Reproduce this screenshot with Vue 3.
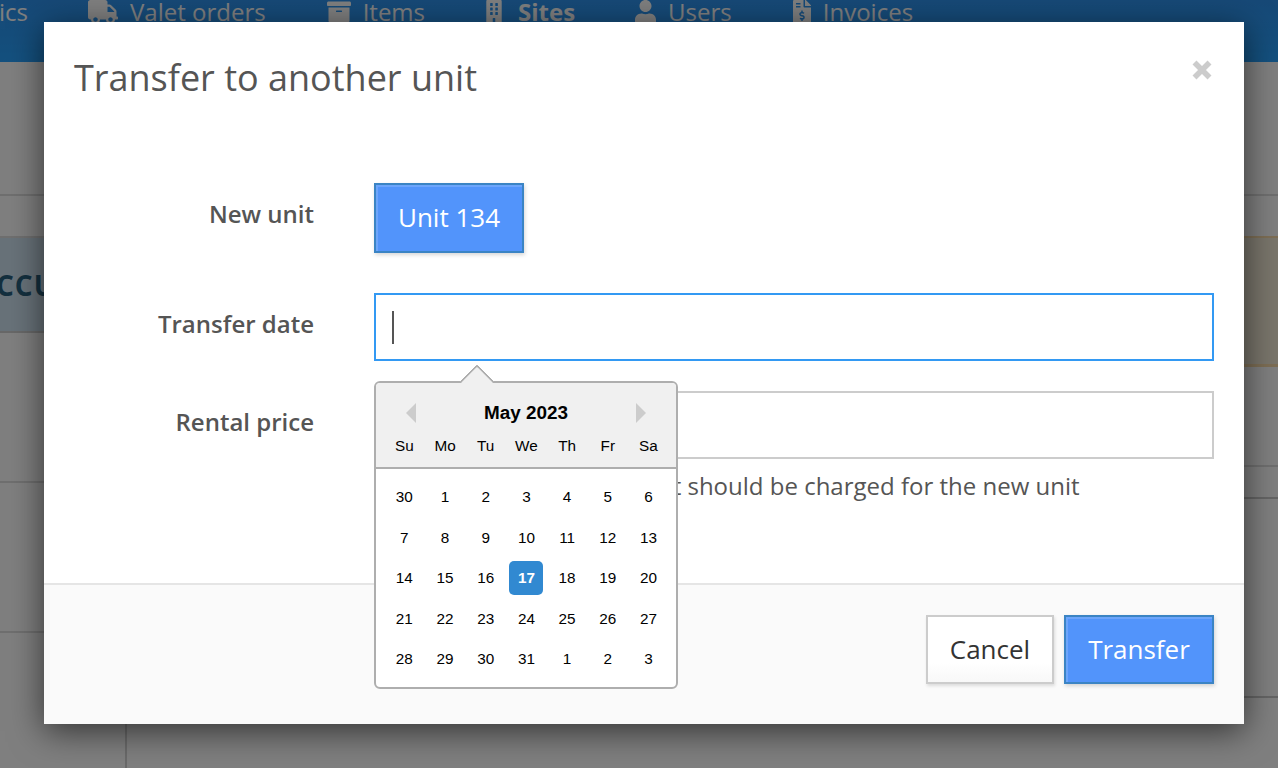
<script setup>
const navItems = [
  { label: 'Valet orders', ml: 60, vb: '0 0 640 512', w: 30, h: 24, d: 'M624 352h-16V243.9c0-12.7-5.1-24.9-14.1-33.9L494 110.1c-9-9-21.2-14.1-33.9-14.1H416V48c0-26.5-21.5-48-48-48H48C21.5 0 0 21.5 0 48v320c0 26.5 21.5 48 48 48h16c0 53 43 96 96 96s96-43 96-96h128c0 53 43 96 96 96s96-43 96-96h48c8.8 0 16-7.2 16-16v-32c0-8.8-7.2-16-16-16zM160 464c-26.5 0-48-21.5-48-48s21.5-48 48-48 48 21.5 48 48-21.5 48-48 48zm320 0c-26.5 0-48-21.5-48-48s21.5-48 48-48 48 21.5 48 48-21.5 48-48 48zm80-208H416V144h44.1l99.9 99.9V256z' },
  { label: 'Items', ml: 61, vb: '0 0 512 512', w: 24, h: 24, d: 'M32 448c0 17.7 14.3 32 32 32h384c17.7 0 32-14.3 32-32V160H32v288zm160-212c0-6.6 5.4-12 12-12h104c6.6 0 12 5.4 12 12v8c0 6.6-5.4 12-12 12H204c-6.6 0-12-5.4-12-12v-8zM480 32H32C14.3 32 0 46.3 0 64v48c0 8.8 7.2 16 16 16h480c8.8 0 16-7.2 16-16V64c0-17.7-14.3-32-32-32z' },
  { label: 'Sites', ml: 60, bold: true, vb: '0 0 448 512', w: 18, h: 24, d: 'M436 480h-20V24c0-13.3-10.7-24-24-24H56C42.7 0 32 10.7 32 24v456H12c-6.6 0-12 5.4-12 12v20h448v-20c0-6.6-5.4-12-12-12zM128 76c0-6.6 5.4-12 12-12h40c6.6 0 12 5.4 12 12v40c0 6.6-5.4 12-12 12h-40c-6.6 0-12-5.4-12-12V76zm0 96c0-6.6 5.4-12 12-12h40c6.6 0 12 5.4 12 12v40c0 6.6-5.4 12-12 12h-40c-6.6 0-12-5.4-12-12v-40zm52 148h-40c-6.6 0-12-5.4-12-12v-40c0-6.6 5.4-12 12-12h40c6.6 0 12 5.4 12 12v40c0 6.6-5.4 12-12 12zm76 160h-64v-84c0-6.6 5.4-12 12-12h40c6.6 0 12 5.4 12 12v84zm64-172c0 6.6-5.4 12-12 12h-40c-6.6 0-12-5.4-12-12v-40c0-6.6 5.4-12 12-12h40c6.6 0 12 5.4 12 12v40zm0-96c0 6.6-5.4 12-12 12h-40c-6.6 0-12-5.4-12-12v-40c0-6.6 5.4-12 12-12h40c6.6 0 12 5.4 12 12v40zm0-96c0 6.6-5.4 12-12 12h-40c-6.6 0-12-5.4-12-12V76c0-6.6 5.4-12 12-12h40c6.6 0 12 5.4 12 12v40z' },
  { label: 'Users', ml: 60, vb: '0 0 448 512', w: 21, h: 24, d: 'M224 256c70.7 0 128-57.3 128-128S294.7 0 224 0 96 57.3 96 128s57.3 128 128 128zm89.6 32h-16.7c-22.2 10.2-46.9 16-72.9 16s-50.6-5.8-72.9-16h-16.7C60.2 288 0 348.2 0 422.4V464c0 26.5 21.5 48 48 48h352c26.5 0 48-21.5 48-48v-41.6c0-74.2-60.2-134.4-134.4-134.4z' },
  { label: 'Invoices', ml: 61, vb: '0 0 384 512', w: 18, h: 24, d: 'M377 105L279.1 7c-4.5-4.5-10.6-7-17-7H256v128h128v-6.1c0-6.3-2.5-12.4-7-16.9zm-153 31V0H24C10.7 0 0 10.7 0 24v464c0 13.3 10.7 24 24 24h336c13.3 0 24-10.7 24-24V160H248c-13.2 0-24-10.8-24-24zM64 72c0-4.42 3.58-8 8-8h80c4.42 0 8 3.58 8 8v16c0 4.42-3.58 8-8 8H72c-4.42 0-8-3.58-8-8V72zm0 80v-16c0-4.42 3.58-8 8-8h80c4.42 0 8 3.58 8 8v16c0 4.42-3.58 8-8 8H72c-4.42 0-8-3.58-8-8zm144 263.88V440c0 4.42-3.58 8-8 8h-16c-4.42 0-8-3.58-8-8v-24.29c-11.29-.58-22.27-4.52-31.37-11.35-3.9-2.93-4.1-8.77-.57-12.14l11.75-11.21c2.77-2.64 6.89-2.76 10.13-.73 3.87 2.42 8.26 3.72 12.82 3.72h28.11c6.5 0 11.8-5.92 11.8-13.19 0-5.95-3.61-11.19-8.77-12.73l-45-13.5c-18.59-5.58-31.58-23.42-31.58-43.39 0-24.52 19.05-44.44 42.67-45.07V232c0-4.42 3.58-8 8-8h16c4.42 0 8 3.58 8 8v24.29c11.29.58 22.27 4.51 31.37 11.35 3.9 2.93 4.1 8.77.57 12.14l-11.75 11.21c-2.77 2.64-6.89 2.76-10.13.73-3.87-2.43-8.26-3.72-12.82-3.72h-28.11c-6.5 0-11.8 5.92-11.8 13.19 0 5.95 3.61 11.19 8.77 12.73l45 13.5c18.59 5.58 31.58 23.42 31.58 43.39 0 24.53-19.05 44.44-42.67 45.07z' }
]

const leftRows = [
  { h: 134 },
  { h: 42 },
  { h: 95, kind: 'blue', text: 'CCUPIED' },
  { h: 150 },
  { h: 150 },
  { h: 135, kind: 'last' }
]
const rightRows = [
  { h: 134 },
  { h: 42 },
  { h: 131, kind: 'yellow' },
  { h: 100 },
  { h: 32, kind: 'dark' },
  { h: 199, kind: 'dark' },
  { h: 70, kind: 'last' }
]

const dayNames = ['Su', 'Mo', 'Tu', 'We', 'Th', 'Fr', 'Sa']
const days = [
  30, 1, 2, 3, 4, 5, 6,
  7, 8, 9, 10, 11, 12, 13,
  14, 15, 16, 17, 18, 19, 20,
  21, 22, 23, 24, 25, 26, 27,
  28, 29, 30, 31, 1, 2, 3
]
const selectedIndex = 17
</script>

<template>
  <div class="page">
    <header class="nav">
      <span class="nav-item first-item">ics</span>
      <span
        v-for="item in navItems"
        :key="item.label"
        class="nav-item"
        :class="{ bold: item.bold }"
        :style="{ marginLeft: item.ml + 'px' }"
      >
        <svg class="nav-icon" :viewBox="item.vb" :width="item.w" :height="item.h" preserveAspectRatio="none" fill="currentColor"><path :d="item.d" /></svg>
        {{ item.label }}
      </span>
    </header>

    <div class="content">
      <div class="col-left">
        <div v-for="(r, i) in leftRows" :key="i" class="row" :class="r.kind" :style="{ height: r.h + 'px' }">
          <span v-if="r.text" class="row-text">{{ r.text }}</span>
        </div>
      </div>
      <div class="col-right">
        <div v-for="(r, i) in rightRows" :key="i" class="row" :class="r.kind" :style="{ height: r.h + 'px' }"></div>
      </div>
    </div>

    <div class="backdrop"></div>

    <section class="modal">
      <div class="modal-head">
        <h2 class="title">Transfer to another unit</h2>
        <svg class="close" viewBox="0 0 20 20" width="20" height="20">
          <path d="M2.5 2.5L17.5 17.5M17.5 2.5L2.5 17.5" stroke="#cccccc" stroke-width="5.6" fill="none" />
        </svg>
      </div>

      <div class="form">
        <div class="form-row first">
          <label class="label">New unit</label>
          <div class="field"><button class="btn primary unit">Unit 134</button></div>
        </div>
        <div class="form-row second">
          <label class="label">Transfer date</label>
          <div class="field">
            <div class="input focused"><span class="caret-bar"></span></div>
            <div class="calendar">
              <span class="pointer"></span>
              <div class="cal-head">
                <div class="cal-month">
                  <span class="arrow left"></span>
                  <span>May 2023</span>
                  <span class="arrow right"></span>
                </div>
                <div class="cal-grid names">
                  <span v-for="n in dayNames" :key="n">{{ n }}</span>
                </div>
              </div>
              <div class="cal-grid cal-days">
                <span v-for="(d, i) in days" :key="i" class="day" :class="{ selected: i === selectedIndex }">{{ d }}</span>
              </div>
            </div>
          </div>
        </div>
        <div class="form-row third">
          <label class="label">Rental price</label>
          <div class="field">
            <div class="input"></div>
            <p class="help">The monthly rental fee that should be charged for the new unit</p>
          </div>
        </div>
      </div>

      <footer class="modal-foot">
        <button class="btn cancel">Cancel</button>
        <button class="btn primary transfer">Transfer</button>
      </footer>
    </section>
  </div>
</template>

<style>
html, body { margin: 0; overflow: hidden; background: #fff; }
</style>

<style scoped>
.page {
  position: relative;
  width: 1278px;
  height: 768px;
  overflow: hidden;
  font-family: "Open Sans", "Noto Sans", sans-serif;
  background: #fff;
}
.nav {
  height: 62px;
  box-sizing: border-box;
  padding-bottom: 38px;
  display: flex;
  align-items: center;
  background: linear-gradient(#2e92ee, #28a2fe);
  color: #fff;
  font-size: 24px;
  white-space: nowrap;
}
.nav-item { display: inline-flex; align-items: center; gap: 12px; line-height: 22px; }
.nav-item.first-item { margin-left: -1px; }
.nav-item.bold { font-weight: 700; gap: 15px; }
.nav-icon { flex: none; }

.content { display: flex; }
.col-left { width: 125px; flex: none; }
.col-right { flex: 1; border-left: 2px solid #d4d4d4; }
.row {
  box-sizing: border-box;
  border-bottom: 2px solid #dedede;
  display: flex;
  align-items: center;
}
.row.last { border-bottom: 0; }
.row.dark { border-bottom-color: #cacaca; }
.row.blue { background: #d0e4f2; border-bottom-color: #d0d0d0; }
.row.yellow {
  background: #f3ebd6;
  border-top: 2px solid #fadcaa;
  border-bottom: 3px solid #fadcaa;
  margin-top: -2px;
}
.row-text {
  margin-left: -4px;
  font-size: 28px;
  font-weight: 700;
  letter-spacing: 1px;
  color: #28607f;
  white-space: nowrap;
}

.backdrop { position: absolute; inset: 0; background: rgba(0, 0, 0, 0.5); }

.modal {
  position: absolute;
  left: 44px;
  top: 22px;
  width: 1200px;
  height: 702px;
  background: #fff;
  color: #555;
  display: flex;
  flex-direction: column;
  box-shadow: 0 7px 32px rgba(0, 0, 0, 0.6);
}
.modal-head {
  height: 161px;
  flex: none;
  box-sizing: border-box;
  padding: 30px 32px 0 30px;
  display: flex;
  justify-content: space-between;
  align-items: flex-start;
}
.title { margin: 0; font-size: 36px; font-weight: 400; line-height: 52px; color: #555; }
.close { margin-top: 8px; }

.form { flex: 1; padding-right: 30px; }
.form-row { display: grid; grid-template-columns: 270px 840px; column-gap: 60px; align-items: start; }
.form-row.first { height: 110px; }
.form-row.second { height: 98px; }
.label { font-size: 24px; font-weight: 600; text-align: right; color: #555; line-height: 34px; padding-top: 14px; }
.field { position: relative; }

.btn {
  font-family: inherit;
  font-size: 26px;
  line-height: 1;
  box-sizing: border-box;
  border-style: solid;
  border-width: 2px;
  cursor: pointer;
  padding: 0 0 2px;
}
.primary {
  background: #5294fb;
  border-color: #3b84c4;
  color: #fff;
  box-shadow: inset 2px 2px 0 rgba(255, 255, 255, 0.16), 1px 2px 4px rgba(0, 0, 0, 0.16);
}
.unit { width: 150px; height: 70px; display: block; }
.cancel {
  width: 128px;
  height: 69px;
  border-color: #ccc;
  color: #333;
  background: linear-gradient(#fff 70%, #f8f8f8);
  box-shadow: 1px 2px 3px rgba(0, 0, 0, 0.12);
}
.transfer { width: 150px; height: 69px; }

.input {
  box-sizing: border-box;
  height: 68px;
  border: 2px solid #ccc;
  background: #fff;
  display: flex;
  align-items: center;
  padding-left: 16px;
}
.input.focused { border-color: #3399f3; }
.caret-bar { width: 2px; height: 33px; background: #555; }
.help { margin: 9px 0 0; padding-left: 2px; font-size: 24px; line-height: 36px; color: #555; white-space: nowrap; }

.calendar {
  position: absolute;
  left: 0;
  top: 88px;
  z-index: 2;
  box-sizing: border-box;
  width: 304px;
  height: 308px;
  background: #fff;
  border: 2px solid #aeaeae;
  border-radius: 6px;
  font-family: "Liberation Sans", Arial, sans-serif;
  color: #000;
}
.pointer {
  position: absolute;
  left: 89px;
  top: -14px;
  width: 24px;
  height: 24px;
  box-sizing: border-box;
  background: #f0f0f0;
  border-top: 2px solid #aeaeae;
  border-left: 2px solid #aeaeae;
  border-top-left-radius: 3px;
  transform: rotate(45deg);
}
.cal-head {
  position: relative;
  height: 86px;
  box-sizing: border-box;
  background: #f0f0f0;
  border-bottom: 2px solid #aeaeae;
  border-radius: 4px 4px 0 0;
}
.cal-month {
  height: 60px;
  box-sizing: border-box;
  padding: 0 30px;
  display: flex;
  align-items: center;
  justify-content: space-between;
  font-size: 18.9px;
  font-weight: 700;
}
.arrow { width: 0; height: 0; border-top: 10px solid transparent; border-bottom: 10px solid transparent; }
.arrow.left { border-right: 10px solid #ccc; }
.arrow.right { border-left: 10px solid #ccc; }
.cal-grid {
  display: grid;
  grid-template-columns: repeat(7, 40.7px);
  justify-items: center;
  padding: 0 8px;
  font-size: 15.3px;
}
.names { line-height: 18px; margin-top: -6px; }
.cal-days { grid-auto-rows: 40.5px; align-items: center; padding-top: 8px; }
.day { width: 34px; height: 34px; display: flex; align-items: center; justify-content: center; border-radius: 5px; }
.day.selected { background: #3189d1; color: #fff; font-weight: 700; }

.modal-foot {
  flex: none;
  height: 141px;
  box-sizing: border-box;
  background: #fafafa;
  border-top: 2px solid #e5e5e5;
  padding: 30px 30px 0;
  display: flex;
  justify-content: flex-end;
  align-items: flex-start;
  gap: 10px;
}
</style>
